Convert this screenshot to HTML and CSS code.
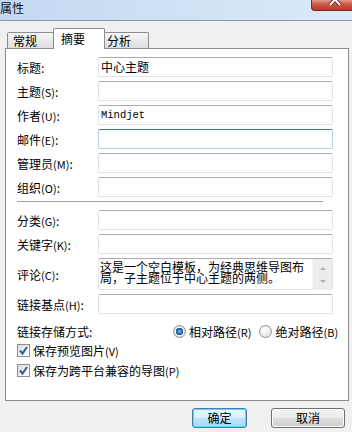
FILE: index.html
```html
<!DOCTYPE html>
<html lang="zh-CN">
<head>
    <meta charset="UTF-8">
    <meta name="viewport" content="width=device-width, initial-scale=1.0">
    <title>属性</title>
    <link rel="stylesheet" href="styles.css">
</head>
<body>
    <div class="titlebar">
        <span class="title">属性</span>
        <div class="close-btn">
            <svg width="41" height="11" viewBox="0 0 41 11">
                <path d="M18 -5 L28 6 M28 -5 L18 6" stroke="#6b2418" stroke-width="4" fill="none"/>
                <path d="M18 -5 L28 6 M28 -5 L18 6" stroke="#ffffff" stroke-width="2" fill="none"/>
            </svg>
        </div>
    </div>

    <div class="client">
        <div class="tabs">
            <div class="tab tab-first">常规</div>
            <div class="tab tab-active">摘要</div>
            <div class="tab tab-last">分析</div>
        </div>

        <div class="panel">
            <div class="row">
                <label>标题:</label>
                <div class="field">中心主题</div>
            </div>
            <div class="row">
                <label>主题<span class="key">(S)</span>:</label>
                <div class="field"></div>
            </div>
            <div class="row">
                <label>作者<span class="key">(U)</span>:</label>
                <div class="field mono">Mindjet</div>
            </div>
            <div class="row">
                <label>邮件<span class="key">(E)</span>:</label>
                <div class="field focused"></div>
            </div>
            <div class="row">
                <label>管理员<span class="key">(M)</span>:</label>
                <div class="field"></div>
            </div>
            <div class="row">
                <label>组织<span class="key">(O)</span>:</label>
                <div class="field"></div>
            </div>

            <div class="separator"></div>

            <div class="row">
                <label>分类<span class="key">(G)</span>:</label>
                <div class="field"></div>
            </div>
            <div class="row">
                <label>关键字<span class="key">(K)</span>:</label>
                <div class="field"></div>
            </div>
            <div class="row row-tall">
                <label>评论<span class="key">(C)</span>:</label>
                <div class="field memo">
                    <div class="memo-text">这是一个空白模板，为经典思维导图布局，子主题位于中心主题的两侧。</div>
                    <div class="scrollbar">
                        <span class="arrow up"></span>
                        <span class="arrow down"></span>
                    </div>
                </div>
            </div>
            <div class="row">
                <label>链接基点<span class="key">(H)</span>:</label>
                <div class="field"></div>
            </div>

            <div class="storage">
                <span class="storage-label">链接存储方式:</span>
                <span class="radio checked"></span>
                <span class="option">相对路径<span class="key">(R)</span></span>
                <span class="radio"></span>
                <span class="option">绝对路径<span class="key">(B)</span></span>
            </div>

            <div class="check-row first">
                <span class="checkbox">
                    <svg width="11" height="11" viewBox="0 0 11 11">
                        <path d="M2 5.5 L4.5 8.5 L9 2" stroke="#3a5a9e" stroke-width="2" fill="none"/>
                    </svg>
                </span>
                <span>保存预览图片<span class="key">(V)</span></span>
            </div>
            <div class="check-row">
                <span class="checkbox">
                    <svg width="11" height="11" viewBox="0 0 11 11">
                        <path d="M2 5.5 L4.5 8.5 L9 2" stroke="#3a5a9e" stroke-width="2" fill="none"/>
                    </svg>
                </span>
                <span>保存为跨平台兼容的导图<span class="key">(P)</span></span>
            </div>
        </div>

        <div class="buttons">
            <div class="btn btn-default btn-ok">确定</div>
            <div class="btn btn-cancel">取消</div>
        </div>
    </div>
</body>
</html>
```
FILE: styles.css
```css
* {
    box-sizing: border-box;
}

body {
    margin: 0;
    width: 352px;
    height: 432px;
    overflow: hidden;
    background-color: #f0f0f0;
    font-family: "Noto Sans CJK SC", "Liberation Sans", sans-serif;
    font-size: 12px;
    color: #000;
}

.key {
    font-size: 11px;
}

/* window title */
.titlebar {
    display: flex;
    height: 21px;
    border-bottom: 1px solid #8c97a3;
    background: linear-gradient(to right, #c3d9f1, #dceaf8);
}

.title {
    font-size: 12px;
    line-height: 15px;
    color: #111;
}

.close-btn {
    margin-left: auto;
    width: 41px;
    height: 11px;
    border: 1px solid #7a2a1e;
    border-top: none;
    border-right: none;
    border-radius: 0 0 0 4px;
    background: linear-gradient(#e29a8c, #cc5444 45%, #b73a2a);
    overflow: hidden;
}

.close-btn svg {
    display: block;
    margin-top: -1px;
}

/* client area */
.client {
    padding: 7px 4px 0 5px;
}

.tabs {
    display: flex;
    align-items: flex-end;
    height: 20px;
    padding-left: 2px;
    position: relative;
    z-index: 1;
}

.tab {
    height: 16px;
    border: 1px solid #898c95;
    border-bottom: none;
    border-radius: 2px 2px 0 0;
    background: linear-gradient(#f7f7f7, #e9e9e9 50%, #dedede);
    line-height: 15px;
}

.tab-first {
    width: 47px;
    padding-left: 5px;
}

.tab-active {
    width: 52px;
    height: 21px;
    margin-left: -1px;
    margin-bottom: -1px;
    padding-left: 7px;
    padding-top: 2px;
    background: #fff;
    position: relative;
}

.tab-last {
    width: 45px;
    margin-left: -1px;
    padding-left: 3px;
    border-left: none;
}

.panel {
    width: 344px;
    height: 353px;
    border: 1px solid #898c95;
    background-color: #fff;
    padding: 8px 0 0 11px;
}

.row {
    display: flex;
    align-items: center;
    height: 20px;
    margin-bottom: 4px;
}

.row label {
    width: 81px;
    flex: none;
    white-space: nowrap;
}

.field {
    width: 235px;
    height: 20px;
    border: 1px solid #e2e3ea;
    border-top-color: #abadb3;
    border-radius: 2px;
    background: #fff;
    padding-left: 2px;
    line-height: 18px;
}

.field.mono {
    font-family: "Liberation Mono", monospace;
    font-size: 10.5px;
}

.field.focused {
    border-color: #b5cfe7;
    border-top-color: #3d7bad;
}

.row-tall {
    height: 32px;
}

.memo {
    display: flex;
    height: 32px;
    padding: 2px 0 0 1px;
}

.memo-text {
    width: 212px;
    line-height: 11px;
    font-size: 12px;
    word-break: break-all;
}

.scrollbar {
    width: 20px;
    margin-left: auto;
    margin-top: -2px;
    height: 31px;
    background: #ededed;
    border-left: 1px solid #f6f6f6;
    position: relative;
}

.arrow {
    position: absolute;
    left: 7px;
    width: 0;
    height: 0;
    border-left: 3px solid transparent;
    border-right: 3px solid transparent;
}

.arrow.up {
    top: 8px;
    border-bottom: 3px solid #b0b0b0;
}

.arrow.down {
    top: 21px;
    border-top: 3px solid #b0b0b0;
}

.separator {
    width: 306px;
    height: 1px;
    margin: 1px 0 8px 0;
    background-color: #a0a0a0;
}

/* storage radios */
.storage {
    display: flex;
    align-items: center;
    height: 16px;
    margin-top: 9px;
    white-space: nowrap;
}

.storage-label {
    width: 156px;
    flex: none;
}

.radio {
    width: 13px;
    height: 13px;
    border: 1px solid #8e8f8f;
    border-radius: 50%;
    background: radial-gradient(circle at 40% 35%, #ffffff, #dcdcdc);
    margin-right: 3px;
    flex: none;
}

.radio.checked {
    background: radial-gradient(circle, #7ec2f0 0, #2a78c0 2px, #1b5a9c 3.5px, #f4f4f4 4px, #dcdcdc 6px);
}

.option {
    margin-right: 8px;
    flex: none;
}

.check-row {
    display: flex;
    align-items: center;
    height: 16px;
    margin-top: 4px;
    white-space: nowrap;
}

.check-row.first {
    margin-top: 3px;
}

.checkbox {
    width: 13px;
    height: 13px;
    border: 1px solid #8e8f8f;
    background: linear-gradient(135deg, #dcdcdc, #ffffff);
    margin-right: 3px;
    flex: none;
}

.checkbox svg {
    display: block;
    margin: 0;
}

/* dialog buttons */
.buttons {
    display: flex;
    margin-top: 7px;
    padding-left: 187px;
}

.btn {
    height: 20px;
    border: 1px solid #707070;
    border-radius: 3px;
    background: linear-gradient(#f2f2f2, #ebebeb 50%, #dddddd 50%, #cfcfcf);
    box-shadow: inset 0 0 0 1px #fcfcfc;
    text-align: center;
    line-height: 18px;
}

.btn-default {
    border-color: #3c7fb1;
    background: linear-gradient(#eaf6fd, #d9f0fc 50%, #bee6fd 50%, #a7d9f5);
    box-shadow: inset 0 0 0 1px #48dfff;
}

.btn-ok {
    width: 55px;
}

.btn-cancel {
    width: 74px;
    margin-left: 24px;
}
```
